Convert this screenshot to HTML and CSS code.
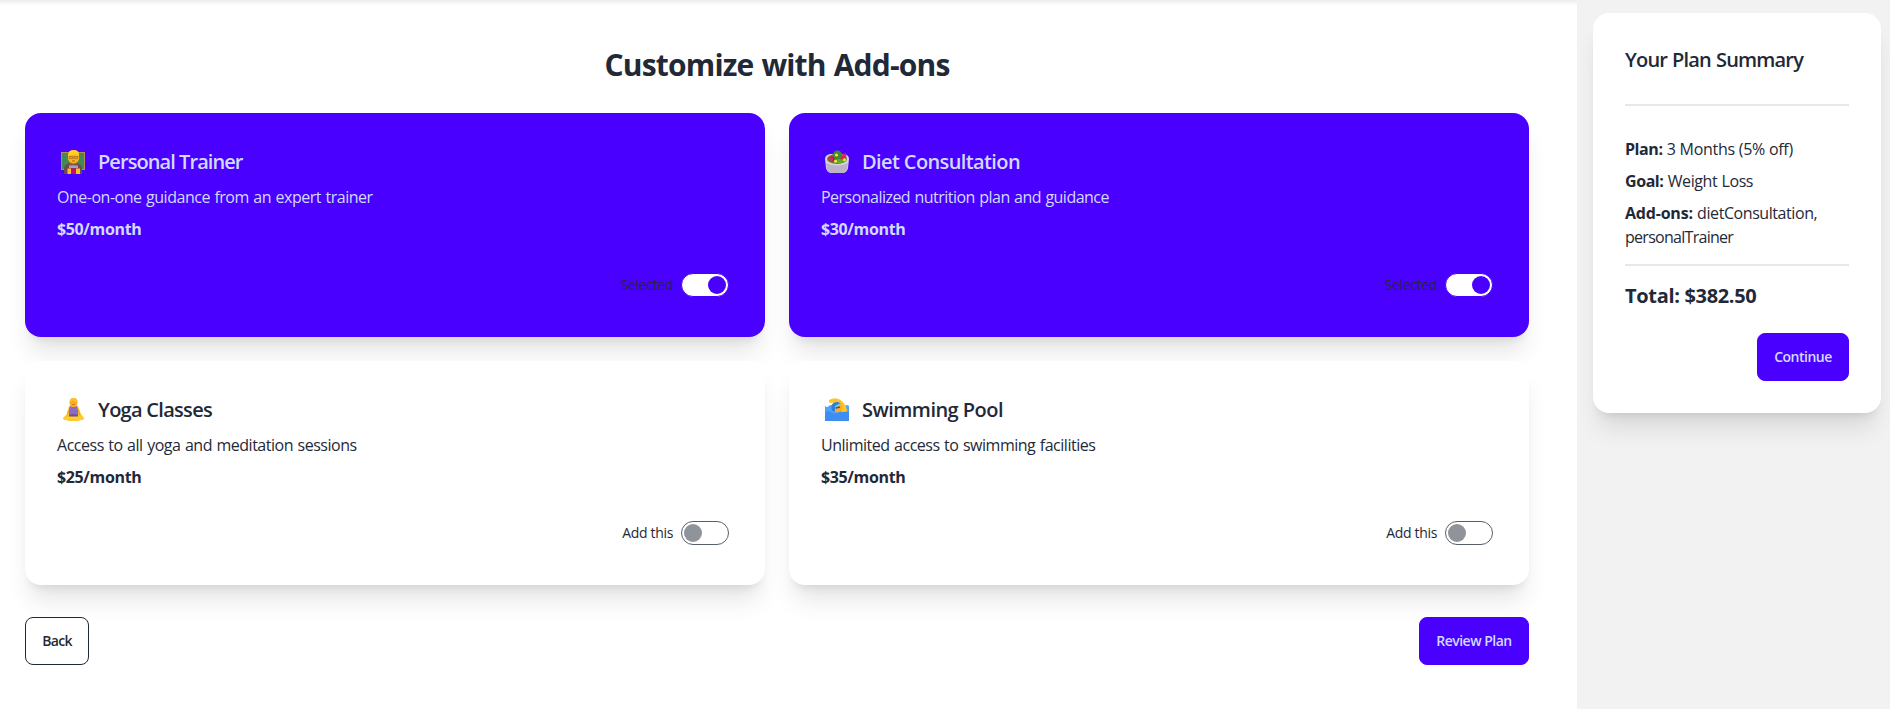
FILE: index.html
```html
<!DOCTYPE html>
<html lang="en">
<head>
<meta charset="utf-8">
<title>Customize with Add-ons</title>
<link rel="stylesheet" href="styles.css">
</head>
<body>
<div class="layout">
  <main class="main">
    <h1 class="heading">Customize with Add-ons</h1>
    <div class="grid">
      <section class="card card-selected">
        <h2 class="title title-trainer">
          <svg class="emoji" viewBox="0 0 24 24">
            <rect x="0" y="2" width="24" height="18" fill="#b98b4e"/>
            <rect x="1" y="3" width="22" height="16" fill="#3f8a55"/>
            <path d="M3 24v-5q0-5 6-6h6q6 1 6 6v5z" fill="#6d4a4d"/>
            <path d="M8 12h8l-1 5H9z" fill="#8b5a4a"/>
            <path d="M7 6q0-6 5.500-6T18 6v3q-1 4-5.500 4.500Q8 13 7 9z" fill="#fbb81c"/>
            <path d="M7 6q0-6 5.500-6T18 5q-6-2-11 1z" fill="#ffd21f"/>
            <path d="M8 6.500h4v2.200H8.500zM13 6.500h4l-.5 2.200H13z" fill="#e9a01a" stroke="#9a5c20" stroke-width=".6"/>
            <path d="M11 11h3" stroke="#c04a2b" stroke-width="1"/>
            <rect x="8" y="15.500" width="9" height="2.500" fill="#a9a0c4"/>
            <rect x="7" y="18.500" width="11" height="5.500" fill="#c40f66"/>
            <path d="M6.500 18.500h3.500V24H6.500zM15 18.500h4V24h-4z" fill="#f8c12b"/>
          </svg>
          <span>Personal Trainer</span>
        </h2>
        <p class="desc">One-on-one guidance from an expert trainer</p>
        <p class="price">$50/month</p>
        <div class="actions"><span class="label selected-label">Selected</span><span class="toggle toggle-on"><i class="knob"></i></span></div>
      </section>
      <section class="card card-selected">
        <h2 class="title title-diet">
          <svg class="emoji" viewBox="0 0 24 24">
            <path d="M0 9q0-4 5-5h14q5 1 5 5l-1 9q-1 5-6 5H7q-5 0-6-5z" fill="#d9d1df"/>
            <path d="M1 13q11 5 22 0l-1 6q-1 4-5 4H7q-4 0-5-4z" fill="#bdb2c9"/>
            <ellipse cx="12" cy="9" rx="10" ry="5" fill="#4a8a2d"/>
            <path d="M3 8l5-3 3 7q-5 1-7-2zM16 5l5-2q1 4-1 7l-5-1z" fill="#d32a57"/>
            <circle cx="12.500" cy="5" r="4.500" fill="#3e8b35"/>
            <path d="M9 11q5-4 11 0-4 4-11 1z" fill="#64a82f"/>
            <path d="M6 7l3 1-1 3" stroke="#8f213d" fill="none"/>
            <g fill="#ffe135"><circle cx="11.500" cy="5" r="1.600"/><circle cx="10.500" cy="11.300" r="1.500"/><circle cx="19.500" cy="9.800" r="1.500"/></g>
          </svg>
          <span>Diet Consultation</span>
        </h2>
        <p class="desc desc-diet">Personalized nutrition plan and guidance</p>
        <p class="price">$30/month</p>
        <div class="actions"><span class="label selected-label">Selected</span><span class="toggle toggle-on"><i class="knob"></i></span></div>
      </section>
      <section class="card">
        <h2 class="title">
          <svg class="emoji" viewBox="0 0 24 24">
            <path d="M8 8q4-2 9 0l3 8 3 4q0 2-3 2l-3 1H8l-3-1q-3 0-3-2l4-4z" fill="#ffc525"/>
            <path d="M3 20q5-3 9.500-1Q17 17 22 20q-1 2-5 2l-4.500-1L8 22q-5 0-5-2z" fill="#ffd02a"/>
            <path d="M9 8q3 2 7 0l1 4v6H8v-6z" fill="#8b6cc4"/>
            <path d="M8 17q4-2 9 0v1.500H8z" fill="#6f4fa5"/>
            <path d="M7.500 12l-1 5M17.500 12l1 5" stroke="#f39a22"/>
            <path d="M8.500 5q0-5 4-5t4 5l-1 3q-3 2-6 0z" fill="#f8ac20"/>
            <path d="M8.500 5q0-5 4-5t4 4q-4 0-5-2-1 2-3 3z" fill="#ffbe2b"/>
            <path d="M11 6.500h3" stroke="#d87821"/>
          </svg>
          <span>Yoga Classes</span>
        </h2>
        <p class="desc">Access to all yoga and meditation sessions</p>
        <p class="price">$25/month</p>
        <div class="actions"><span class="label">Add this</span><span class="toggle"><i class="knob"></i></span></div>
      </section>
      <section class="card">
        <h2 class="title title-swim">
          <svg class="emoji" viewBox="0 0 24 24">
            <path d="M0 8q2 2 4 0t4 0h8q2 2 4 0t4 0v15H0z" fill="#4ea3ff"/>
            <path d="M4 2q7-4 13 1 4 4 5.500 10l-6 2q-1-6-4-9-3-2-8-1z" fill="#fdc42a"/>
            <circle cx="12.500" cy="9.500" r="5" fill="#f9ad28"/>
            <path d="M6.500 11q-1-7 6-7 2 0 3 2-5 1-6 8-2 0-3-3z" fill="#2b7fd8"/>
            <path d="M10 9l5-3" stroke="#75c5ff" stroke-width="1.500"/>
            <path d="M11 10l4-1" stroke="#3a5685" stroke-width="1.300"/>
            <path d="M0 14q3-2 5.500 0t6 1 6-1 6.500 0v9H0z" fill="#3d8df2"/>
          </svg>
          <span>Swimming Pool</span>
        </h2>
        <p class="desc">Unlimited access to swimming facilities</p>
        <p class="price">$35/month</p>
        <div class="actions"><span class="label">Add this</span><span class="toggle"><i class="knob"></i></span></div>
      </section>
    </div>
    <div class="nav">
      <button class="btn btn-outline">Back</button>
      <button class="btn btn-primary">Review Plan</button>
    </div>
  </main>
  <aside class="sidebar">
    <div class="summary">
      <h2 class="summary-title">Your Plan Summary</h2>
      <hr class="divider divider-wide">
      <p class="row"><strong>Plan:</strong> <span class="plan-value">3 Months (5% off)</span></p>
      <p class="row"><strong>Goal:</strong> Weight Loss</p>
      <p class="row"><strong class="addons-key">Add-ons:</strong> dietConsultation, <span class="trainer-value">personalTrainer</span></p>
      <hr class="divider">
      <p class="total">Total: $382.50</p>
      <div class="summary-actions"><button class="btn btn-primary btn-continue">Continue</button></div>
    </div>
  </aside>
</div>
</body>
</html>
```
FILE: styles.css
```css
* { box-sizing: border-box; margin: 0; padding: 0; }
body {
  height: 709px;
  overflow: hidden;
  background: #f2f2f2;
  color: #1f2937;
  font: 16px/24px "Open Sans", "Noto Sans", sans-serif;
  letter-spacing: -0.4px;
}
.layout { display: flex; height: 709px; }
.main {
  width: 1577px;
  padding: 45px 48px 0 25px;
  background: linear-gradient(#ececec, #fff 5px);
}
.heading {
  height: 68px;
  font-size: 30px;
  line-height: 40px;
  font-weight: 700;
  letter-spacing: -0.82px;
  word-spacing: 1px;
  text-align: center;
}
.grid { display: grid; grid-template-columns: 1fr 1fr; gap: 24px; }
.card, .summary {
  border-radius: 16px;
  background: #fff;
  box-shadow: 0 20px 25px -5px rgba(0, 0, 0, .1), 0 8px 10px -6px rgba(0, 0, 0, .1);
}
.card {
  display: flex;
  flex-direction: column;
  gap: 8px;
  height: 224px;
  padding: 32px;
}
.card-selected { background: #4a00ff; color: #d1dbff; }
.title {
  display: flex;
  align-items: center;
  gap: 13px;
  height: 32px;
  padding: 2px 0 0 4px;
  font-size: 20px;
  line-height: 28px;
  font-weight: 600;
  letter-spacing: -0.71px;
}
.title-trainer { letter-spacing: -0.93px; }
.title-diet { letter-spacing: -0.61px; }
.title-swim { letter-spacing: -0.53px; }
.emoji { width: 24px; height: 24px; flex: none; }
.desc { letter-spacing: -0.48px; word-spacing: 0.8px; }
.desc-diet { letter-spacing: -0.53px; }
.price { font-weight: 700; letter-spacing: -0.36px; }
.actions {
  display: flex;
  align-items: center;
  justify-content: flex-end;
  gap: 8px;
  margin-top: auto;
  padding: 8px 4px;
}
.label { font-size: 14px; line-height: 20px; letter-spacing: -0.33px; color: #1f2937; }
.toggle {
  display: flex;
  width: 48px;
  height: 24px;
  padding: 2px;
  border: 1px solid #575f6b;
  border-radius: 12px;
  background: #fff;
}
.knob { width: 18px; height: 18px; border-radius: 9px; background: #8f949b; }
.toggle-on { justify-content: flex-end; border-color: #4a00ff; padding: 1px 2px; }
.toggle-on .knob { margin: 1px 0; background: #4a00ff; }
.nav { display: flex; justify-content: space-between; margin-top: 32px; }
.btn {
  height: 48px;
  padding: 0 16px;
  border: 1px solid #4a00ff;
  border-radius: 8px;
  font: 600 14px/14px "Open Sans", "Noto Sans", sans-serif;
  letter-spacing: -0.5px;
}
.btn-primary { width: 110px; background: #4a00ff; color: #d1dbff; }
.btn-outline { width: 64px; border-color: #1f2937; background: transparent; color: #1f2937; letter-spacing: -0.7px; }
.btn-continue { width: 92px; }
.sidebar { flex: 1; padding: 13px 9px 0 16px; }
.summary { height: 400px; padding: 33px 32px 32px; }
.summary-title {
  height: 58px;
  font-size: 20px;
  line-height: 28px;
  font-weight: 600;
  letter-spacing: -0.82px;
  word-spacing: 0.6px;
}
.divider { height: 2px; border: 0; background: #e8e8e8; margin: 15px 0 16px; }
.divider-wide { margin: 0 0 31px; }
.row { letter-spacing: -0.43px; word-spacing: 0.6px; }
.row + .row { margin-top: 8px; }
.plan-value { letter-spacing: -0.28px; word-spacing: 0; }
.addons-key { letter-spacing: -0.2px; }
.trainer-value { letter-spacing: -0.72px; }
.total { font-size: 20px; line-height: 28px; font-weight: 700; letter-spacing: -0.33px; }
.summary-actions { display: flex; justify-content: flex-end; margin-top: 23px; }
```
